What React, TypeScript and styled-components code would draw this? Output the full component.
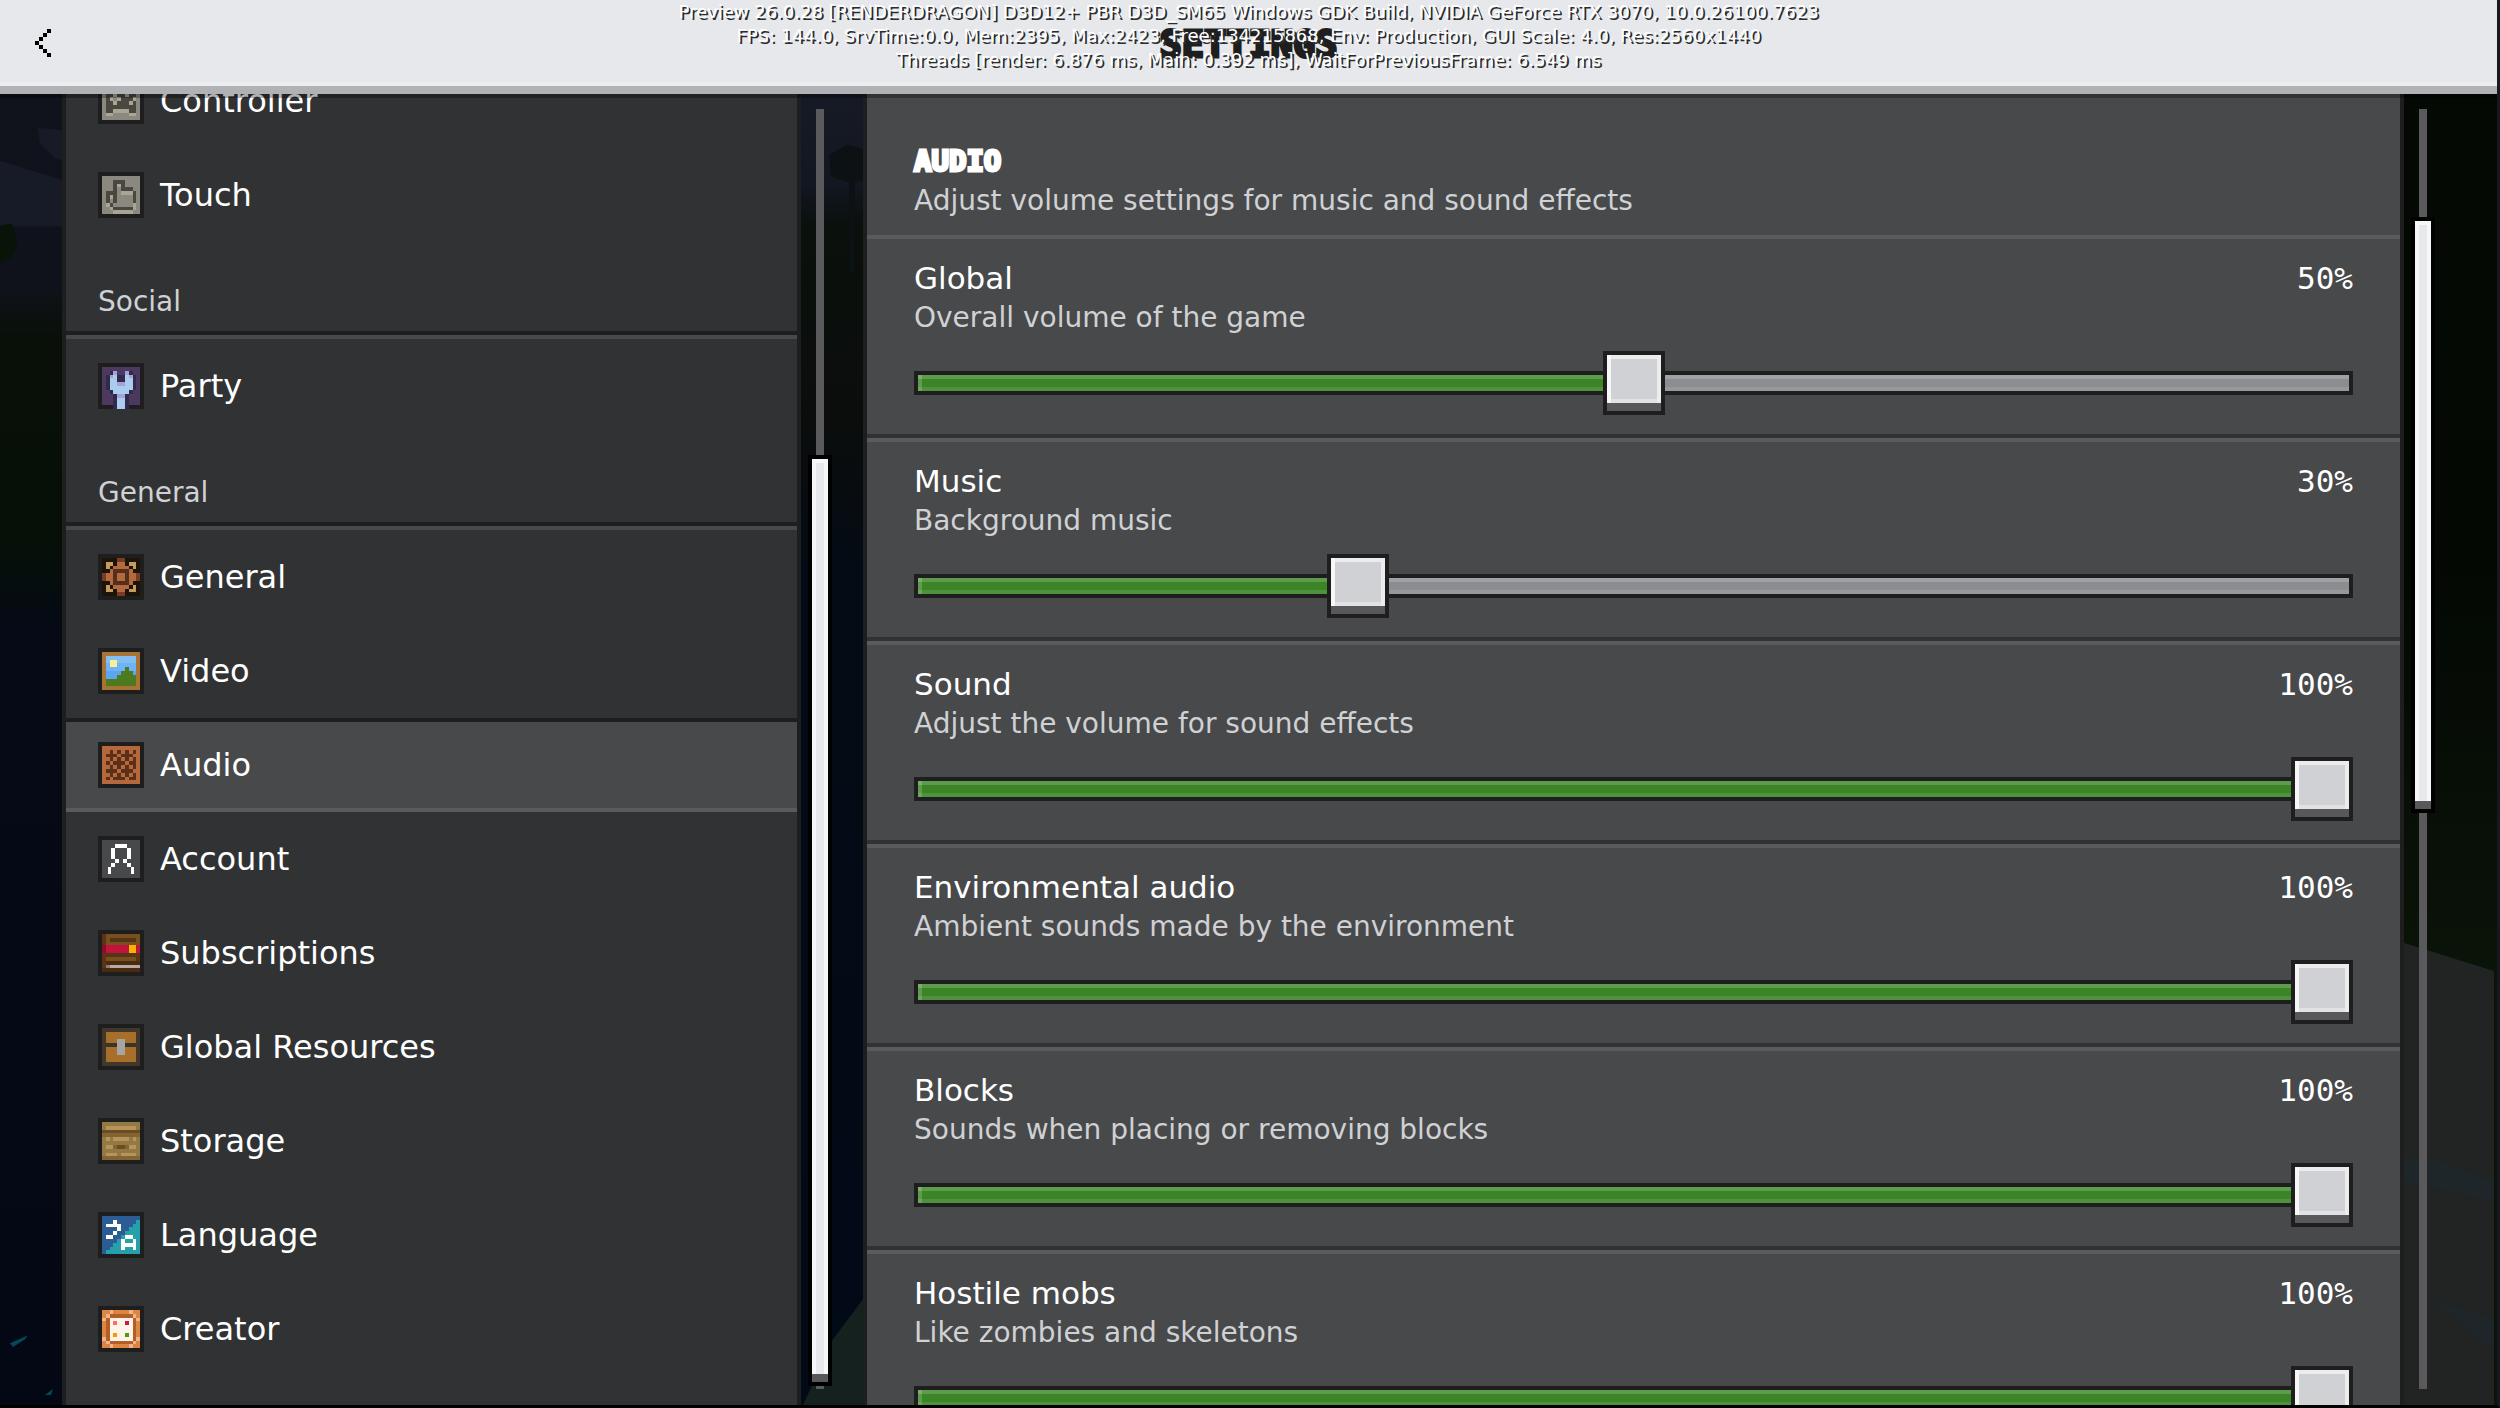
import React, { useState } from "react";
import styled, { createGlobalStyle, css } from "styled-components";

const color = {
  ink: "#1e1e1f",
  panel: "#313233",
  surface: "#48494a",
  edge: "#5a5b5c",
  muted: "#d0d1d4",
  header: "#e6e8eb",
};

const sans = `"DejaVu Sans", "Noto Sans", sans-serif`;
const mono = `"DejaVu Sans Mono", "Liberation Mono", monospace`;

const GlobalStyle = createGlobalStyle`
  *, *::before, *::after { box-sizing: border-box; }
  html, body { margin: 0; background: #000; }
  h1, h2, h3, p { margin: 0; font-weight: 400; }
  button { font: inherit; color: inherit; border: 0; background: none; padding: 0; cursor: pointer; }
`;

const Screen = styled.div`
  position: relative;
  isolation: isolate;
  display: flex;
  flex-direction: column;
  height: 100vh;
  border-right: 3px solid #17171c;
  border-bottom: 3px solid #000;
  overflow: hidden;
  background: #05090f;
  color: #fff;
  font-family: ${sans};
`;

const Scene = styled.svg`
  position: absolute;
  inset: 0;
  z-index: -1;
  width: 100%;
  height: 100%;
`;

const Header = styled.header`
  position: relative;
  z-index: 1;
  flex: none;
  display: grid;
  grid-template-columns: 1fr auto 1fr;
  align-items: center;
  height: 94px;
  background: ${color.header};
  border-bottom: 8px solid #b1b2b5;
  box-shadow: inset 0 -4px 0 #ecedef, 0 4px 0 rgba(0, 0, 0, 0.3);
`;

const BackButton = styled.button`
  display: flex;
  align-items: center;
  justify-self: start;
  height: 86px;
  padding: 0 35px;
`;

const Title = styled.h1`
  padding-top: 4px;
  color: ${color.ink};
  font: 700 37px/44px ${mono};
  -webkit-text-stroke: 3px ${color.ink};
`;

const DebugOverlay = styled.div`
  position: absolute;
  top: 0;
  left: 0;
  right: 0;
  text-align: center;
  white-space: nowrap;
  pointer-events: none;
  color: #fff;
  font-size: 18px;
  line-height: 24px;
  text-shadow: 2px 2px 0 #2c2c2d;
`;

const Body = styled.div`
  flex: 1;
  min-height: 0;
  display: grid;
  grid-template-columns: minmax(320px, 739px) 62px minmax(0, 1fr) 93px;
  grid-template-rows: minmax(0, 1fr);
  padding-left: 62px;
`;

const panel = css`
  border: solid ${color.ink};
  border-width: 0 4px;
  overflow: hidden;
`;

const Sidebar = styled.nav`
  ${panel}
  background: ${color.panel};
`;

const SidebarScroll = styled.div`
  margin-top: -40px;
`;

const SectionTitle = styled.h2`
  padding: 42px 32px 15px;
  color: ${color.muted};
  font-size: 28px;
  line-height: 36px;
  border-bottom: 4px solid ${color.surface};
  box-shadow: inset 0 -4px 0 ${color.ink};
`;

const NavItem = styled.button<{ $active?: boolean }>`
  display: flex;
  align-items: center;
  gap: 16px;
  width: 100%;
  height: 94px;
  padding: 0 32px;
  font-size: 32px;
  line-height: 36px;
  text-align: left;
  border: solid transparent;
  border-width: 4px 0;
  ${(p) =>
    p.$active &&
    css`
      background: ${color.surface};
      border-top-color: ${color.ink};
      border-bottom-color: ${color.edge};
    `}
`;

const IconSvg = styled.svg`
  flex: none;
  width: 46px;
  height: 46px;
`;

const Gutter = styled.div`
  display: flex;
  padding: 15px 15px 16px;
`;

const Track = styled.div`
  position: relative;
  width: 8px;
  background: #5a5a5c;
`;

const ScrollThumb = styled.div<{ $top: number; $size: number }>`
  position: absolute;
  left: -8px;
  width: 24px;
  top: ${(p) => p.$top}%;
  height: ${(p) => p.$size}%;
  border: 4px solid #000;
  background: ${color.header};
  box-shadow: inset 0 -8px 0 #58585a, inset 0 0 0 4px #f6f7f8;
`;

const Content = styled.main`
  ${panel}
  background: ${color.surface};
`;

const Intro = styled.section`
  display: flex;
  flex-direction: column;
  gap: 4px;
  padding: 49px 47px 16px;
`;

const IntroTitle = styled.h2`
  font: 700 29px/36px ${mono};
  -webkit-text-stroke: 3px #fff;
`;

const Description = styled.p`
  color: ${color.muted};
  font-size: 28px;
  line-height: 36px;
`;

const Setting = styled.section`
  display: flex;
  flex-direction: column;
  padding: 21px 47px 19px;
  border-top: 4px solid ${color.edge};
  border-bottom: 4px solid ${color.panel};
`;

const SettingHead = styled.div`
  display: flex;
  justify-content: space-between;
  align-items: baseline;
  margin-bottom: 4px;
  font-size: 31px;
  line-height: 36px;
`;

const Value = styled.output`
  font-family: ${mono};
`;

const Slider = styled.input`
  --fill: 0%;
  appearance: none;
  display: block;
  width: 100%;
  height: 64px;
  margin: 15px 0 0;
  background: none;
  cursor: pointer;

  &::-webkit-slider-runnable-track {
    height: 24px;
    background: linear-gradient(to right, #3c8527 var(--fill), #8c8d90 var(--fill));
    box-shadow:
      inset 0 0 0 4px ${color.ink},
      inset 0 8px 0 rgba(255, 255, 255, 0.18),
      inset 8px 0 0 rgba(255, 255, 255, 0.18),
      inset 0 -8px 0 rgba(255, 255, 255, 0.1);
  }

  &::-webkit-slider-thumb {
    appearance: none;
    width: 62px;
    height: 64px;
    margin-top: -20px;
    border: 4px solid ${color.ink};
    border-radius: 0;
    background: #d0d1d4;
    box-shadow:
      inset 0 -8px 0 #58585a,
      inset 4px 0 0 #f7f7f8,
      inset 0 4px 0 #ececee,
      inset -4px 0 0 #ececee,
      inset 0 -12px 0 #e2e2e4;
  }
`;

type Sprite = { palette: Record<string, string>; rows: string[] };

const sprites: Record<string, Sprite> = {
  controller: {
    palette: { g: "#8b8880", d: "#4a4741", l: "#a8a693" },
    rows: [
      "............", ".gggggggggg.", ".gggggggggg.", ".gddddddddg.",
      ".gddlddlddg.", ".gdlgldddlg.", ".gddldddldg.", ".gddddddddg.",
      ".gddllllddg.", ".gllggggllg.", ".gggggggggg.", "............",
    ],
  },
  touch: {
    palette: { g: "#8b8880", d: "#4a4741", l: "#a8a693" },
    rows: [
      "............", ".gggggggggg.", ".gggdddgggg.", ".gggdldgggg.",
      ".gggdgdddgg.", ".gdddgllldg.", ".gdldggggdg.", ".gdgdggggdg.",
      ".gldggggglg.", ".ggldddddlg.", ".ggglllllgg.", "............",
    ],
  },
  party: {
    palette: { p: "#4b3960", k: "#33294a", v: "#a6a0dd", b: "#aacdef" },
    rows: [
      "............", ".pppppppppp.", ".ppkvppvkpp.", ".pkvbkkbvkp.",
      ".pkbbkkbbkp.", ".pkbbvvbbkp.", ".pkbbbbbbkp.", ".ppkbbbbkpp.",
      ".pppkvvkppp.", ".pppkbbkppp.", ".pppkbbkppp.", "....kbbk....",
    ],
  },
  general: {
    palette: { d: "#1c140b", r: "#7b3a21", t: "#c69c5d", o: "#b26a3e", b: "#54301b" },
    rows: [
      "............", ".ddddrrdddd.", ".dttdoodttd.", ".dtdoooodtd.",
      ".ddobbbbodd.", ".roobooboor.", ".roobooboor.", ".ddobbbbodd.",
      ".dtdoooodtd.", ".dttdoodttd.", ".ddddrrdddd.", "............",
    ],
  },
  video: {
    palette: { f: "#a87436", a: "#84bff3", b: "#6fb3f7", c: "#5ba6ee", y: "#fbf09a", g: "#4b7a1f" },
    rows: [
      "............", ".ffffffffff.", ".faaaaaaaaf.", ".fayyaaaaaf.",
      ".fbyybbbbbf.", ".fbbbbbgbbf.", ".fccccgggcf.", ".fcccgggggf.",
      ".fggggggggf.", ".fggggggggf.", ".ffffffffff.", "............",
    ],
  },
  audio: {
    palette: { o: "#b5683c", d: "#5a3019" },
    rows: [
      "............", ".oooooooooo.", ".oododododo.", ".odddodddoo.",
      ".oododododo.", ".ododddoddo.", ".oododododo.", ".odddodddoo.",
      ".oododododo.", ".ododddoddo.", ".oooooooooo.", "............",
    ],
  },
  subscriptions: {
    palette: {
      e: "#5c3317", b: "#77501f", d: "#553518", k: "#8b0d28", r: "#c3133d",
      y: "#f5b400", n: "#4a2b10", g: "#8b7d78", l: "#b5aaa5",
    },
    rows: [
      "............", ".ebbbbbbbbb.", ".ebdddddddb.", ".ebbbbbbbbb.",
      ".krrrrrryyr.", ".krrrrrryyr.", ".eddddddddd.", ".ebbbbbbbbd.",
      ".ennnnnnnnn.", ".egllllllll.", ".nnnnnnnnnn.", "............",
    ],
  },
  resources: {
    palette: { f: "#41372c", o: "#a86f2b", d: "#3a342b", g: "#a5a5a5" },
    rows: [
      "............", ".ffffffffff.", ".foooooooof.", ".foooooooof.",
      ".foooggooof.", ".fdddggdddf.", ".foooggooof.", ".foooggooof.",
      ".foooooooof.", ".foooooooof.", ".ffffffffff.", "............",
    ],
  },
  storage: {
    palette: { m: "#917a43", t: "#b8935a", d: "#6b4d24", n: "#856433" },
    rows: [
      "............", ".mmmmmmmmmm.", ".mttttttttm.", ".dddddddddd.",
      ".nnnnnnnnnn.", ".mtmttttmtm.", ".mmmmmmmmmm.", ".mttnddnttm.",
      ".mmmmmmmmmm.", ".mtttmttttm.", ".nnnnnnnnnn.", "............",
    ],
  },
  language: {
    palette: { b: "#2b5c93", t: "#26a0ab", w: "#ffffff" },
    rows: [
      "............", ".bbbbbbbbbb.", ".bbbwbbbbbt.", ".bwwwwbbbtt.",
      ".bbbbwbbttt.", ".bbbwbbtttt.", ".bwwbbtwwtt.", ".bbbbtwttwt.",
      ".bbbttwwwwt.", ".bbtttwttwt.", ".bttttttttt.", "............",
    ],
  },
  creator: {
    palette: {
      o: "#df8544", l: "#eeb58d", b: "#b35f24", w: "#fdf3e8",
      p: "#ff6b6b", c: "#c9184a", y: "#f59a00", g: "#4b9a10",
    },
    rows: [
      "............", ".oolooooloo.", ".olbbbbbblo.", ".lbwwwwwwbl.",
      ".obwpwwcwbo.", ".obwwwwwwbo.", ".obwwwwwwbo.", ".obwywwgwbo.",
      ".lbwwwwwwbl.", ".olbbbbbblo.", ".oolooooloo.", "............",
    ],
  },
};

/* Merges equal neighbours of a sprite row into single rectangles. */
function spriteRects({ palette, rows }: Sprite) {
  const rects: React.ReactElement[] = [];
  rows.forEach((row, y) => {
    let x = 0;
    while (x < row.length) {
      let end = x + 1;
      while (end < row.length && row[end] === row[x]) end += 1;
      const fill = palette[row[x]];
      if (fill) rects.push(<rect key={`${x}-${y}`} x={x} y={y} width={end - x} height={1} fill={fill} />);
      x = end;
    }
  });
  return rects;
}

function AccountFigure() {
  return (
    <>
      <rect x="1" y="1" width="10" height="10" fill="#48494a" />
      <path
        fill="#fff"
        d="M4.5 2h3v1h-3zM3.5 3h1v3h-1zM7.5 3h1v3h-1zM4.5 6h1v1h-1zM6.5 6h1v1h-1zM3.5 7h1v1h-1zM7.5 7h1v1h-1zM2.5 8h1v2h-1zM8.5 8h1v2h-1z"
      />
    </>
  );
}

function Icon({ name }: { name: string }) {
  return (
    <IconSvg viewBox="0 0 12 12" shapeRendering="crispEdges" aria-hidden="true">
      <rect width="12" height="12" fill={color.ink} />
      {name === "account" ? <AccountFigure /> : spriteRects(sprites[name])}
    </IconSvg>
  );
}

const navigation = [
  { title: "", items: [["controller", "Controller"], ["touch", "Touch"]] },
  { title: "Social", items: [["party", "Party"]] },
  {
    title: "General",
    items: [
      ["general", "General"],
      ["video", "Video"],
      ["audio", "Audio"],
      ["account", "Account"],
      ["subscriptions", "Subscriptions"],
      ["resources", "Global Resources"],
      ["storage", "Storage"],
      ["language", "Language"],
      ["creator", "Creator"],
    ],
  },
];

const settings = [
  { id: "global", label: "Global", text: "Overall volume of the game", value: 50 },
  { id: "music", label: "Music", text: "Background music", value: 30 },
  { id: "sound", label: "Sound", text: "Adjust the volume for sound effects", value: 100 },
  { id: "environment", label: "Environmental audio", text: "Ambient sounds made by the environment", value: 100 },
  { id: "blocks", label: "Blocks", text: "Sounds when placing or removing blocks", value: 100 },
  { id: "hostile", label: "Hostile mobs", text: "Like zombies and skeletons", value: 100 },
];

function VolumeSetting({ id, label, text, value }: (typeof settings)[number]) {
  const [level, setLevel] = useState(value);
  return (
    <Setting>
      <SettingHead>
        <label htmlFor={id}>{label}</label>
        <Value htmlFor={id}>{level}%</Value>
      </SettingHead>
      <Description>{text}</Description>
      <Slider
        id={id}
        type="range"
        min={0}
        max={100}
        value={level}
        onChange={(e) => setLevel(Number(e.target.value))}
        style={{ "--fill": `${level}%` } as React.CSSProperties}
      />
    </Setting>
  );
}

function NightScene() {
  return (
    <Scene viewBox="0 0 2500 1408" preserveAspectRatio="none" aria-hidden="true">
      <defs>
        <linearGradient id="west" x1="0" y1="0" x2="0" y2="1">
          <stop offset="0.05" stopColor="#0f131b" />
          <stop offset="0.2" stopColor="#10121b" />
          <stop offset="0.24" stopColor="#091008" />
          <stop offset="0.38" stopColor="#061006" />
          <stop offset="0.45" stopColor="#050a16" />
          <stop offset="1" stopColor="#030814" />
        </linearGradient>
        <linearGradient id="middle" x1="0" y1="0" x2="0" y2="1">
          <stop offset="0.07" stopColor="#151a25" />
          <stop offset="0.13" stopColor="#131722" />
          <stop offset="0.16" stopColor="#0a100c" />
          <stop offset="0.3" stopColor="#0b0d0c" />
          <stop offset="0.4" stopColor="#030b14" />
          <stop offset="1" stopColor="#020a18" />
        </linearGradient>
        <linearGradient id="east" x1="0" y1="0" x2="0" y2="1">
          <stop offset="0.07" stopColor="#040a03" />
          <stop offset="0.4" stopColor="#030803" />
          <stop offset="0.7" stopColor="#0b1409" />
        </linearGradient>
      </defs>
      <rect width="400" height="1408" fill="url(#west)" />
      <path d="M38 128l40 4v34l-24-8-14-14zM0 161l64 20v46H0z" fill="#171a27" />
      <path d="M0 226l12-2 6 20-6 14-12 6z" fill="#091408" />
      <path d="M10 1346l18-8-3 4-12 8zM45 1398l8-6-2 6z" fill="#04485a" />
      <rect x="760" width="140" height="1408" fill="url(#middle)" />
      <path d="M830 155l18-10 16 4v32l-8 2v90h-6v-90l-18-6z" fill="#0c1214" />
      <path d="M804 1408l30-66 30-40v106z" fill="#14211f" />
      <rect x="2390" width="110" height="1408" fill="url(#east)" />
      <path d="M2404 944l93 29v435h-93z" fill="#212423" />
      <path d="M2404 1160l40 4 53 20v20l-60-14-33-6zM2430 1300l67 22v30z" fill="#1f2629" />
    </Scene>
  );
}

export default function App() {
  const [active, setActive] = useState("audio");
  return (
    <>
      <GlobalStyle />
      <Screen>
        <NightScene />
        <Header>
          <BackButton aria-label="Back">
            <svg width="16" height="28" viewBox="0 0 4 7" shapeRendering="crispEdges" aria-hidden="true">
              <path d="M3 0h1v1H3zM2 1h1v1H2zM1 2h1v1H1zM0 3h1v1H0zM1 4h1v1H1zM2 5h1v1H2zM3 6h1v1H3z" />
            </svg>
          </BackButton>
          <Title>SETTINGS</Title>
          <DebugOverlay>
            <div>
              Preview 26.0.28 [RENDERDRAGON] D3D12+ PBR D3D_SM65 Windows GDK Build, NVIDIA GeForce RTX 3070,
              10.0.26100.7623
            </div>
            <div>
              FPS: 144.0, SrvTime:0.0, Mem:2395, Max:2423, Free:134215868, Env: Production, GUI Scale: 4.0,
              Res:2560x1440
            </div>
            <div>Threads [render: 6.876 ms, Main: 0.392 ms], WaitForPreviousFrame: 6.549 ms</div>
          </DebugOverlay>
        </Header>
        <Body>
          <Sidebar aria-label="Settings">
            <SidebarScroll>
              {navigation.map((group) => (
                <React.Fragment key={group.title}>
                  {group.title && <SectionTitle>{group.title}</SectionTitle>}
                  {group.items.map(([id, label]) => (
                    <NavItem key={id} $active={id === active} onClick={() => setActive(id)}>
                      <Icon name={id} />
                      {label}
                    </NavItem>
                  ))}
                </React.Fragment>
              ))}
            </SidebarScroll>
          </Sidebar>
          <Gutter>
            <Track>
              <ScrollThumb $top={27} $size={72.8} />
            </Track>
          </Gutter>
          <Content>
            <Intro>
              <IntroTitle>AUDIO</IntroTitle>
              <Description>Adjust volume settings for music and sound effects</Description>
            </Intro>
            {settings.map((setting) => (
              <VolumeSetting key={setting.id} {...setting} />
            ))}
          </Content>
          <Gutter>
            <Track>
              <ScrollThumb $top={8.4} $size={46.6} />
            </Track>
          </Gutter>
        </Body>
      </Screen>
    </>
  );
}
